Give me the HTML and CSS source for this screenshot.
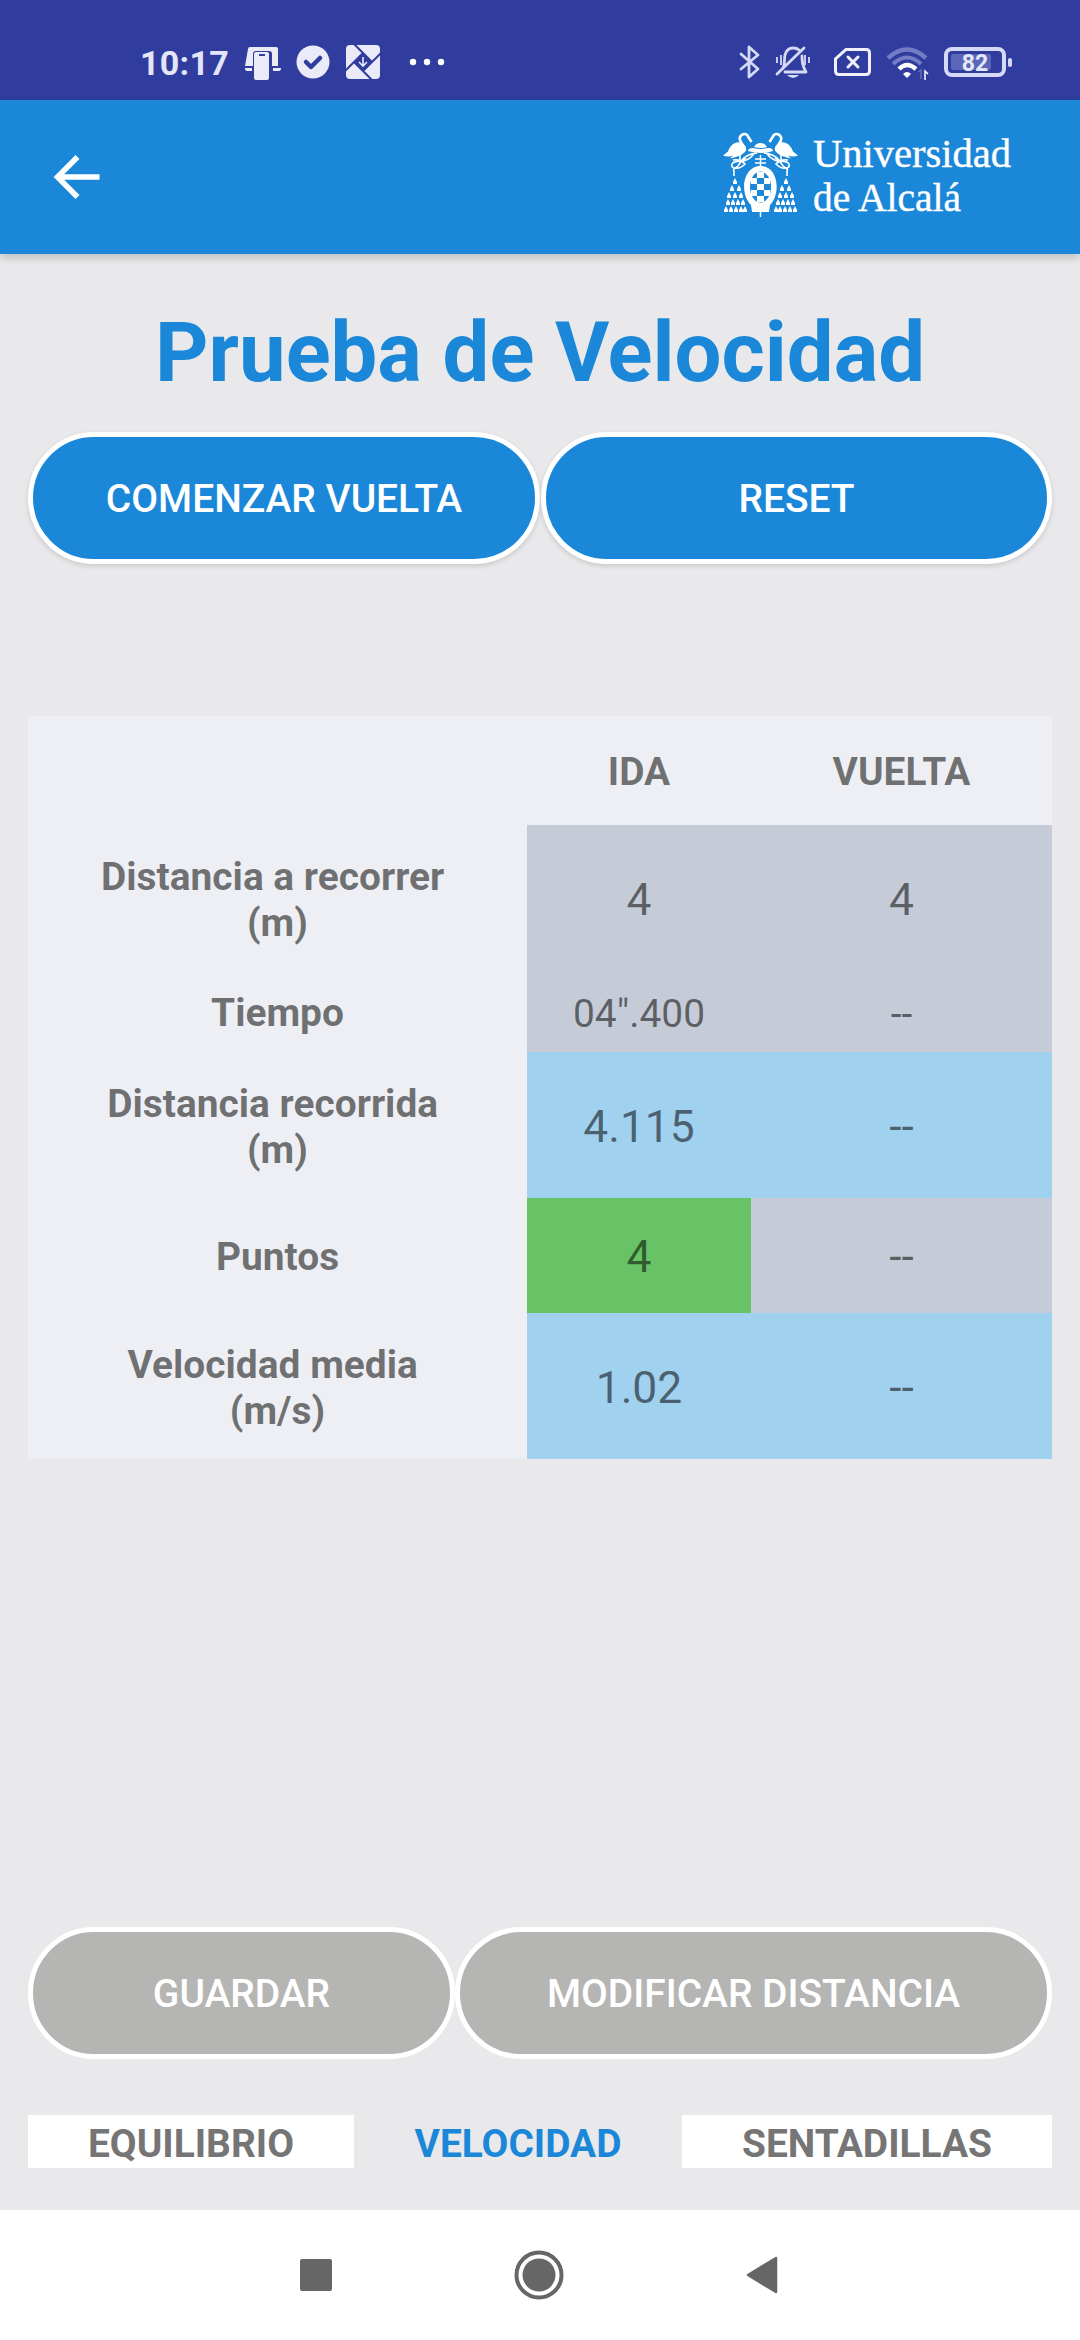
FILE: index.html
```html
<!DOCTYPE html>
<html lang="es">
<head>
<meta charset="utf-8">
<title>Prueba de Velocidad</title>
<link rel="stylesheet" href="styles.css">
</head>
<body>
<div class="screen">
  <header class="status">
    <span class="clock">10:17</span>
    <svg class="status-left" width="210" height="60" viewBox="240 30 210 60">
      <g fill="#eaeaf8">
        <path d="M248 49q0-2 2-2h26q2 0 2 2v17h-6V54q0-3-3-3h-13q-3 0-3 3v12h-8z"/>
        <path d="M245 68h7v3h-5q-2 0-2-3zM273 68h8q0 3-2 3h-6z"/>
        <path fill-rule="evenodd" d="M254 54q0-2 2-2h11q2 0 2 2v24q0 2-2 2h-11q-2 0-2-2zM259 54v2h6v-2z"/>
        <circle cx="313" cy="62" r="16.5"/>
        <rect x="346" y="45" width="34" height="34" rx="4"/>
      </g>
      <path d="M306 62l5 5 9-9" fill="none" stroke="#303d9e" stroke-width="4.5" stroke-linecap="round" stroke-linejoin="round"/>
      <path d="M354.500 44.500L372 62M381 53L363 71M371.500 79.500L354 62M345 71L363 53" fill="none" stroke="#303d9e" stroke-width="2"/>
      <path d="M363 53l9 9-9 9-9-9z" fill="#303d9e"/>
      <path d="M363 57v9m-4-4l4 4 4-4" fill="none" stroke="#eaeaf8" stroke-width="1.6"/>
      <g fill="#fff"><circle cx="413" cy="62" r="3.2"/><circle cx="427" cy="62" r="3.2"/><circle cx="441" cy="62" r="3.2"/></g>
    </svg>
    <svg class="status-right" width="280" height="60" viewBox="734 30 280 60">
      <g fill="none" stroke="#d6d9f5" stroke-width="2.8" stroke-linecap="round" stroke-linejoin="round">
        <path d="M741 54l17 15-9 8V47l9 8-17 14"/>
        <path d="M783 68c2-3 1-9 2-13q2-7 8-7 4 0 6 2M802 56c0 5 0 9 4 16h-21M777 74l27-26"/>
        <path d="M777 57v6M781 55v10M805 55v10M809 57v6" stroke-width="1.8" stroke-linecap="butt"/>
      </g>
      <path d="M787 75h12q-6 6-12 0z" fill="#d6d9f5"/>
      <path d="M846 49.500h20q3.500 0 3.500 3.500v18q0 3.500-3.500 3.500h-27q-3.500 0-3.500-3.500V59z" fill="none" stroke="#f0f1fc" stroke-width="3"/>
      <path d="M848 57l10 10m0-10l-10 10" stroke="#f0f1fc" stroke-width="3" stroke-linecap="round"/>
      <g fill="none" stroke-linecap="butt">
        <path d="M888 58q19-17 38 0" stroke="#737cc4" stroke-width="4.500"/>
        <path d="M893 64q14-13 28 0" stroke="#737cc4" stroke-width="4"/>
        <path d="M899 69q8-8 17 0" stroke="#fff" stroke-width="4.500"/>
      </g>
      <path d="M903 74q4-4 8 0l-4 4z" fill="#fff"/>
      <path d="M918 72l3-2v9" fill="none" stroke="#626cbb" stroke-width="1.500"/>
      <path d="M925 80v-9l3 3" fill="none" stroke="#fff" stroke-width="1.500"/>
      <rect x="951" y="54" width="40" height="16" rx="2" fill="#5c66b8"/>
      <rect x="946" y="49" width="58" height="26" rx="6" fill="none" stroke="#d6d9f5" stroke-width="4"/>
      <rect x="1008" y="58" width="4" height="9" rx="2" fill="#d6d9f5"/>
      <text class="battery" x="975" y="71" text-anchor="middle">82</text>
    </svg>
  </header>

  <div class="appbar">
    <svg width="52" height="48" viewBox="49 153 52 48">
      <path d="M98.500 177H57M76.500 157L56.500 177l20 20" fill="none" stroke="#fff" stroke-width="5.500"/>
    </svg>
    <svg class="brand" width="310" height="96" viewBox="714 125 310 96">
      <g id="side">
        <path d="M722 155.500l5-4c2-6 7-10 12-9 4 1 7 4 6 8-3 5-11 7-16 8q2-2 3-3-5 2-10 0z" fill="#fff"/>
        <path d="M742 150c3-5-5-8-3-13 2-4 7-4 8-.5l3.500 5.500" fill="none" stroke="#fff" stroke-width="2.600"/>
        <g fill="none" stroke="#fff" stroke-width="1.600">
          <path d="M739 155v7q8-1 14-8M756 153q-10 1-15 7l-4 6c-4 4-7 1-6-2 2-4 9-1 14-6M732 160q8-1 12 4-5 5-10 4-2 1-1 4v4"/>
        </g>
        <g fill="#fff">
          <path d="M734 178l2 4v2h-4v-2z"/>
          <path d="M731 185l2 4v2h-4v-2zM738 185l2 4v2h-4v-2z"/>
          <path d="M728 192l2 4v2h-4v-2zM734 192l2 4v2h-4v-2zM740 192l2 4v2h-4v-2z"/>
          <path d="M727 199l2 4v2h-4v-2zM732 199l2 4v2h-4v-2zM737 199l2 4v2h-4v-2zM742 199l2 4v2h-4v-2z"/>
          <path d="M725 206l2 4v2h-4v-2zM730 206l2 4v2h-4v-2zM735 206l2 4v2h-4v-2zM740 206l2 4v2h-4v-2zM744 206l2 4v2h-4v-2z"/>
        </g>
      </g>
      <use href="#side" transform="translate(1519 0) scale(-1 1)"/>
      <path d="M753 147q2-4 6.500-4t6.500 4q-6 2-13 0zM747 151q0-3 5-3 7 2 15 0 5 0 5 3-12 4-25 0z" fill="#fff"/>
      <path d="M759.500 155v12M754 159h11M754 163h11M759.500 211v6" stroke="#fff" stroke-width="1.500"/>
      <path d="M751 212l-1-7c-12-12-8-39 9.500-39s21 27 9.500 39l-1 7z" fill="#fff"/>
      <ellipse cx="759.500" cy="187" rx="10.500" ry="15.500" fill="#1b87d9"/>
      <path d="M756 172h7v6h-7zM750 178h6v6h-6zM763 178h6v6h-6zM756 184h7v6h-7zM750 190h6v6h-6zM763 190h6v6h-6zM756 196h7v6h-7z" fill="#fff"/>
      <g class="wordmark">
        <text x="812" y="167" textLength="198" lengthAdjust="spacingAndGlyphs">Universidad</text>
        <text x="812" y="211" textLength="148" lengthAdjust="spacingAndGlyphs">de Alcalá</text>
      </g>
    </svg>
  </div>

  <main class="content">
    <h1 class="title">Prueba de Velocidad</h1>
    <div class="row row-top">
      <div class="button primary">COMENZAR VUELTA</div>
      <div class="button primary">RESET</div>
    </div>
    <div class="results">
      <div class="cell label"></div><div class="cell label">IDA</div><div class="cell label">VUELTA</div>
      <div class="cell label">Distancia a recorrer&nbsp;<br>(m)</div><div class="cell grey">4</div><div class="cell grey">4</div>
      <div class="cell label">Tiempo</div><div class="cell grey small">04".400</div><div class="cell grey small">--</div>
      <div class="cell label">Distancia recorrida&nbsp;<br>(m)</div><div class="cell blue">4.115</div><div class="cell blue">--</div>
      <div class="cell label">Puntos</div><div class="cell green">4</div><div class="cell grey">--</div>
      <div class="cell label">Velocidad media&nbsp;<br>(m/s)</div><div class="cell blue">1.02</div><div class="cell blue">--</div>
    </div>
    <div class="row row-bottom">
      <div class="button">GUARDAR</div>
      <div class="button">MODIFICAR DISTANCIA</div>
    </div>
    <div class="tabs">
      <div class="tab">EQUILIBRIO</div>
      <div class="tab active">VELOCIDAD</div>
      <div class="tab">SENTADILLAS</div>
    </div>
  </main>

  <nav class="navbar">
    <svg width="32" height="32" viewBox="0 0 32 32"><rect width="32" height="32" rx="2" fill="#666"/></svg>
    <svg width="50" height="50" viewBox="0 0 50 50"><circle cx="25" cy="25" r="22.500" fill="none" stroke="#666" stroke-width="4"/><circle cx="25" cy="25" r="16.500" fill="#666"/></svg>
    <svg width="32" height="38" viewBox="0 0 32 38"><path d="M2 19L30 2v34z" fill="#666" stroke="#666" stroke-width="2.500" stroke-linejoin="round"/></svg>
  </nav>
</div>
</body>
</html>
```
FILE: styles.css
```css
* { box-sizing: border-box; }
body { margin: 0; font-family: Roboto, sans-serif; }
.screen { width: 1080px; height: 2340px; display: flex; flex-direction: column; background: #e9e9eb; overflow: hidden; }

.status { height: 100px; background: #303d9e; display: flex; padding: 30px 66px 0 140px; }
.clock { width: 100px; color: #e4e5f8; font-size: 34px; font-weight: 700; line-height: 66px; letter-spacing: .3px; white-space: nowrap; }
.status-right { margin-left: auto; }
.battery { font: 700 23px Roboto, sans-serif; fill: #e6e8fa; }

.appbar { height: 154px; background: #1b87d9; display: flex; align-items: center; justify-content: space-between; padding: 0 55px 0 50px; box-shadow: 0 3px 9px rgba(0, 0, 0, .2); }
.brand { margin-bottom: 8px; }
.wordmark { font: 41px "Liberation Serif", serif; fill: #fff; stroke: #fff; stroke-width: .4px; }

.content { height: 1956px; padding: 0 28px; display: flex; flex-direction: column; }
.title { margin: 50px 0 0; height: 128px; line-height: 97px; text-align: center; color: #1b87d9; font-size: 83.2px; font-weight: 700; white-space: nowrap; }

.row { display: grid; height: 132px; }
.row-top { grid-template-columns: 512px 511px; gap: 1px; }
.row-bottom { grid-template-columns: 427px 597px; margin-top: 468px; }
.button { display: flex; align-items: center; justify-content: center; padding-top: 2px; border: 5px solid #fff; border-radius: 66px; background: #b5b5b3; color: #fff; font-size: 38.95px; font-weight: 500; white-space: nowrap; }
.primary { background: #1b87d9; box-shadow: 0 2px 5px rgba(0, 0, 0, .14); }

.results { margin-top: 152px; display: grid; grid-template-columns: 499px 224px 301px; grid-template-rows: 109px 146px 81px 146px 115px 146px; }
.cell { display: flex; align-items: center; justify-content: center; padding-top: 3px; text-align: center; font-size: 44.4px; color: rgba(0, 0, 0, .54); }
.label { background: #eeeff4; font-size: 38.9px; font-weight: 700; line-height: 46px; }
.grey { background: #c6ccd7; }
.blue { background: #a0d1ee; }
.green { background: #68c366; }
.small { font-size: 38.9px; }

.tabs { margin-top: 56px; height: 53px; display: grid; grid-template-columns: 326px 328px 370px; }
.tab { display: flex; align-items: center; justify-content: center; padding-top: 3px; background: #fff; color: #757575; font-size: 38.9px; font-weight: 700; }
.active { background: none; color: #1b87d9; }

.navbar { height: 130px; padding-right: 2px; background: #fff; display: grid; grid-template-columns: 32px 50px 32px; justify-content: center; align-items: center; column-gap: 182px; }
```
